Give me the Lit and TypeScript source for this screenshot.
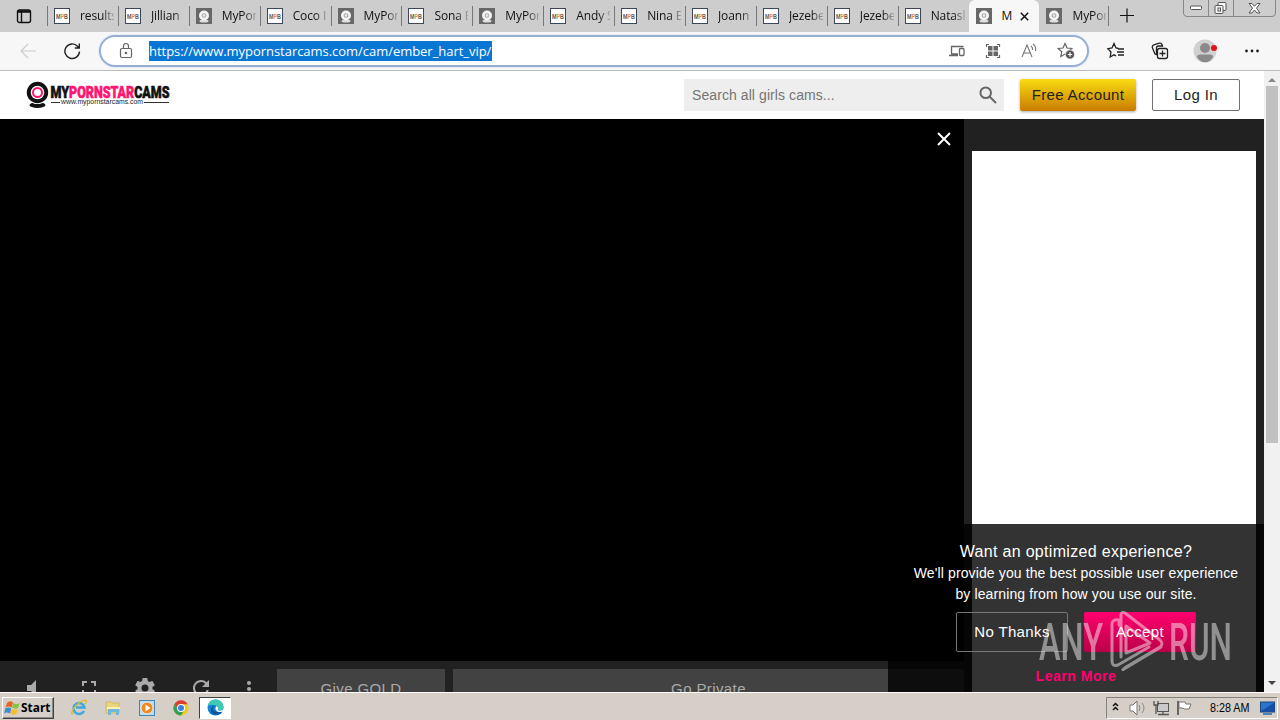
import { LitElement, html, css } from "lit";
import { customElement } from "lit/decorators.js";
import { classMap } from "lit/directives/class-map.js";

interface Tab { title: string; cam?: boolean; active?: boolean }

const tabs: Tab[] = [
  { title: "results" }, { title: "Jillian" }, { title: "MyPor", cam: true }, { title: "Coco I" },
  { title: "MyPor", cam: true }, { title: "Sona E" }, { title: "MyPor", cam: true },
  { title: "Andy S" }, { title: "Nina E" }, { title: "Joann" }, { title: "Jezebe" }, { title: "Jezebe" },
  { title: "Natasl" }, { title: "M", cam: true, active: true }, { title: "MyPor", cam: true },
];

const camIcon = html`<svg class="fav" width="16" height="16" viewBox="0 0 16 16">
  <rect width="16" height="16" fill="#686868"/><ellipse cx="8" cy="13" rx="4.5" ry="1.5" fill="#ddd"/>
  <circle cx="8" cy="7.5" r="5" fill="#f4f4f4"/><circle cx="8" cy="7.5" r="2.3" fill="#aaa"/><circle cx="8" cy="7.5" r="1.2" fill="#eee"/></svg>`;
const mpbIcon = html`<svg class="fav" width="16" height="16" viewBox="0 0 16 16">
  <rect x=".5" y=".5" width="15" height="15" fill="#fff" stroke="#3b4656"/>
  <text x="2" y="10.8" font-family="Liberation Sans" font-weight="700" font-size="7.5" textLength="12" lengthAdjust="spacingAndGlyphs" fill="#665b58">M<tspan fill="#ee8a3c">P</tspan>B</text></svg>`;
const star = "M8 1.5 10 6l4.8.5-3.600 3.200 1 4.800L8 12.100 3.800 14.500l1-4.800L1.200 6.500 6 6Z";

@customElement("app-root")
export class AppRoot extends LitElement {
  static styles = css`
    :host { display: flex; flex-direction: column; width: 1280px; height: 720px; overflow: hidden; position: relative; font-family: "Liberation Sans", Arial, sans-serif; background: #fff; }
    * { box-sizing: border-box; }
    svg { display: block; flex: none; }
    .tabs { height: 32px; flex: none; display: flex; background: #cdcdcd; font: 12px "Open Sans", sans-serif; color: #111; }
    .actions { width: 47px; padding: 8px 0 0 16px; }
    .tab { width: 70.9px; flex: none; display: flex; align-items: flex-start; border-left: 1px solid #777; height: 20px; margin-top: 6px; padding: 2px 0 0 6px; }
    .fav { margin-right: 10px; }
    .title { width: 34px; overflow: hidden; white-space: nowrap; line-height: 16px; letter-spacing: -.12px; -webkit-mask-image: linear-gradient(90deg, #000 65%, #0003); }
    .tab.active { background: #f7f7f7; height: 32px; margin-top: 0; padding-top: 8px; border: 0; border-radius: 6px 6px 0 0; padding-left: 7px; }
    .tab.active .title { width: 11px; -webkit-mask-image: none; }
    .tab.after { border-color: transparent; }
    .close { margin: 4px 0 0 7px; }
    .plus { border-left: 1px solid #777; height: 20px; margin: 6px 0 0 -2px; padding: 2px 0 0 11px; }
    .win { position: absolute; right: 4px; top: -4px; width: 93px; height: 21px; border: 1px solid #888; border-radius: 4px; display: flex; }
    .win span { display: flex; align-items: center; justify-content: center; padding-top: 3px; border-right: 1px solid #888; width: 25px; }
    .win span:last-child { border: 0; width: 41px; }
    .nav { height: 39px; flex: none; display: flex; align-items: center; background: #f7f7f7; border-bottom: 1px solid #bdbdbd; }
    .nav > .back { margin-left: 20px; }
    .nav > .reload { margin-left: 27px; }
    .url { margin-left: 18px; width: 990px; height: 32px; border: 2px solid #98aed2; border-radius: 16px; background: #fff; display: flex; align-items: center; padding: 0 11px 0 17px; box-shadow: 0 0 0 1px #e5edf8; }
    .addr { margin-left: 15px; height: 20px; width: 343px; background: #0a76d4; color: #fff; font: 13px/20px "Open Sans", sans-serif; white-space: nowrap; margin-right: auto; letter-spacing: -.035px; }
    .url .ico { margin-left: 18px; }
    .tools { display: flex; align-items: center; margin-left: 18px; }
    .collections { margin-left: 26px; }
    .profile { margin-left: 24px; }
    .dots { margin-left: 28px; }
    .page { display: flex; height: 621px; flex: none; position: relative; }
    .site { width: 1264px; display: flex; flex-direction: column; position: relative; }
    .head { height: 48px; flex: none; display: flex; align-items: center; padding: 0 24px 0 26px; background: #fff; }
    .search { margin-left: auto; width: 320px; height: 32px; background: #eee; display: flex; align-items: center; padding: 0 7px 0 8px; font-size: 14px; letter-spacing: .08px; color: #757575; justify-content: space-between; }
    .btn { display: flex; align-items: center; justify-content: center; height: 32px; font-size: 15px; letter-spacing: .36px; color: #222; border-radius: 2px; padding-bottom: 1px; }
    .gold { margin: 0 16px; width: 116px; background: linear-gradient(#f8dc12, #ca7b00); box-shadow: 0 1px 3px #0005; }
    .login { width: 88px; border: 1px solid #707070; background: #fff; }
    .body { flex: 1; display: flex; min-height: 0; background: #212121; }
    .video { width: 964px; display: flex; flex-direction: column; }
    .screen { height: 542px; flex: none; background: #000; display: flex; justify-content: flex-end; padding: 12px 12px; }
    .controls { height: 31px; overflow: hidden; display: flex; padding: 8px 0 0 20px; }
    .controls svg { width: 24px; height: 24px; margin: 7px 32px 0 0; fill: #aaa; }
    .controls svg:first-child { margin-right: 33px; }
    .controls svg.last { margin: 8px 16px 0 -8px; }
    .cbtn { width: 168px; height: 40px; flex: none; margin-right: 8px; background: #424242; color: #aaa; font-size: 15px; letter-spacing: .4px; display: flex; align-items: center; justify-content: center; padding-bottom: 1px; }
    .cbtn.wide { width: 511px; }
    .side { width: 284px; margin: 32px 0 0 8px; background: #fff; }
    .consent { position: absolute; right: 0; bottom: 0; width: 376px; height: 168px; background: #000c; color: #fff; text-align: center; padding-top: 17px; overflow: hidden; }
    .h { font-size: 16px; line-height: 21px; letter-spacing: .31px; }
    .p { font-size: 14px; line-height: 21px; letter-spacing: .12px; white-space: nowrap; padding-top: 1px; }
    .pair { display: flex; justify-content: center; gap: 16px; margin-top: 7px; }
    .pair .btn { width: 112px; height: 40px; color: #fff; }
    .no { border: 1px solid #777; }
    .yes { background: linear-gradient(#ff006e, #bb0048); }
    .more { font-size: 14px; font-weight: 700; color: #ff006e; margin-top: 16px; line-height: 17px; letter-spacing: .54px; }
    .scroll { width: 16px; background: #f1f1f1; display: flex; flex-direction: column; align-items: center; }
    .thumb { width: 12px; height: 357px; background: #c1c1c1; margin: 4px 0 auto; }
    .scroll svg { margin-top: 6px; }
    .scroll svg:last-child { margin-bottom: 6px; }
    .task { height: 28px; flex: none; background: #d5cfc7; border-top: 1px solid #fff; display: flex; align-items: center; padding: 2px 2px 0 2px; }
    .start { width: 52px; height: 22px; border: 1px solid; border-color: #fff #404040 #404040 #fff; box-shadow: inset -1px -1px #888; display: flex; align-items: center; padding-left: 1px; }
    .quick { display: flex; gap: 18px; margin-left: 17px; }
    .current { width: 32px; height: 22px; border: 1px solid; border-color: #404040 #fff #fff #404040; background: #fff; margin-left: 10px; display: flex; justify-content: center; align-items: center; }
    .tray { margin-left: auto; width: 172px; height: 22px; border: 1px solid; border-color: #85817b #fff #fff #85817b; display: flex; align-items: center; padding-left: 4px; color: #000; }
    .mark { position: absolute; left: 1036px; top: 608px; }
  `;

  render() {
    return html`
      <div class="tabs">
        <div class="actions"><svg width="16" height="16" viewBox="0 0 16 16" fill="none" stroke="#111" stroke-width="1.400"><rect x="1.500" y="2" width="13" height="12.500" rx="2"/><path d="M1.500 4h13M2 3h12M5.500 4v10"/></svg></div>
        ${tabs.map((t, i) => html`<div class=${classMap({ tab: true, active: !!t.active, after: i === 14 })}>
          ${t.cam ? camIcon : mpbIcon}<span class="title">${t.title}</span>
          ${t.active ? html`<svg class="close" width="9" height="9" viewBox="0 0 9 9"><path d="M.8.8l7.400 7.400M8.200.8.800 8.200" stroke="#111" stroke-width="1.500"/></svg>` : ""}
        </div>`)}
        <div class="plus"><svg width="14" height="16" viewBox="0 0 14 16"><path d="M0 7.500h14M7 .5v14" stroke="#111" stroke-width="1.200"/></svg></div>
      </div>
      <div class="win">
        <span><svg width="13" height="6" viewBox="0 0 13 6"><rect x=".5" y="1" width="11" height="3.500" rx="1" fill="#fff" stroke="#555"/></svg></span>
        <span><svg width="14" height="13" viewBox="0 0 14 13" fill="#f5f5f5" stroke="#555"><rect x="4" y=".5" width="8" height="8" rx="1"/><rect x="1" y="3.500" width="8" height="8" rx="1"/><rect x="4" y="6" width="2.500" height="3"/></svg></span>
        <span><svg width="13" height="11" viewBox="0 0 13 11"><path d="M1 .5h3l2.500 2.800L9 .5h3L8.500 5.200 12 10H9L6.500 7 4 10H1l3.500-4.800Z" fill="#fff" stroke="#555"/></svg></span>
      </div>
      <div class="nav">
        <svg class="back" width="16" height="16" viewBox="0 0 16 16" fill="none" stroke="#ccc" stroke-width="1.200"><path d="M16 8H1M8 1 1 8l7 7"/></svg>
        <svg class="reload" width="18" height="18" viewBox="0 0 18 18" fill="none" stroke="#222" stroke-width="1.400"><path d="M16.500 9.500A7.300 7.300 0 1 1 14.500 4.200L16 6M16.300 1.500V6H11.800"/></svg>
        <div class="url">
          <svg width="16" height="18" viewBox="0 0 16 18" fill="none" stroke="#666" stroke-width="1.200"><rect x="2.500" y="6.500" width="11" height="9" rx="1.500"/><path d="M5.500 6.500V4a2.500 2.500 0 0 1 5 0v2.500"/><circle cx="8" cy="11" r=".7" fill="#666"/></svg>
          <span class="addr">https://www.mypornstarcams.com/cam/ember_hart_vip/</span>
          <svg width="16" height="16" viewBox="0 0 16 16" fill="none" stroke="#666" stroke-width="1.300"><path d="M2.500 11V3.500h12M0 12.500h9M2 11h7"/><rect x="10.500" y="5.500" width="4.500" height="7" rx="1"/></svg>
          <svg class="ico" width="20" height="16" viewBox="0 0 20 16" fill="none" stroke="#666" stroke-width="1.200"><path d="M3.500 4V1.500H6M14 1.500h2.500V4M16.500 12v2.500H14M6 14.500H3.500V12"/><g fill="#666" stroke="none"><rect x="5" y="3" width="4.500" height="4.500"/><rect x="10.500" y="3" width="4.500" height="4.500"/><rect x="5" y="8.500" width="4.500" height="4.500"/><rect x="10.500" y="8.500" width="4.500" height="4.500"/></g></svg>
          <svg class="ico" width="17" height="16" viewBox="0 0 17 16" fill="none" stroke="#777" stroke-width="1.100"><path d="m1 14 5-12 5 12M2.800 10h6.500M10 3q2 1.500 1.500 4M12 1q3.500 2.500 2.500 7"/></svg>
          <svg class="ico" width="20" height="18" viewBox="0 0 20 18" fill="none" stroke="#666" stroke-width="1.200"><path d=${star} transform="translate(1)"/><circle cx="14" cy="12.500" r="4.500" fill="#555" stroke="#fff" stroke-width=".6"/><path d="M11.800 12.500h4.400M14 10.300v4.400" stroke="#fff"/></svg>
        </div>
        <div class="tools">
          <svg width="18" height="18" viewBox="0 0 18 18" fill="none" stroke="#222" stroke-width="1.300"><path d="M11.500 6.500 9 6 7 1.500 5 6l-4.200.7L4 10l-.8 5L7 12.800l2 1M11 7h6M10 10h7M11 13h6"/></svg>
          <svg class="collections" width="18" height="18" viewBox="0 0 18 18" fill="none" stroke="#222" stroke-width="1.300"><path d="M4 12 1.500 6q-.8-2.500 1.300-3.200l5.500-1.600q2-.5 2.800 1.500l.4 1.300H7.500Q5.500 4 5.500 6v6.500Z"/><rect x="6.500" y="6.500" width="10" height="10" rx="2"/><path d="M8.500 11.500h6M11.500 8.500v6"/></svg>
          <svg class="profile" width="24" height="24" viewBox="0 0 24 24"><circle cx="12" cy="12" r="11.500" fill="#d0d0d0"/><circle cx="12" cy="9" r="5" fill="#8a8a8a"/><path d="M4 18q0-2.500 3-2.500h10q3 0 3 2.500-3 5.300-8 5.300T4 18Z" fill="#8a8a8a"/><circle cx="21" cy="9" r="3" fill="#df1420"/></svg>
          <svg class="dots" width="14" height="4" viewBox="0 0 14 4" fill="#222"><circle cx="1.500" cy="2" r="1.400"/><circle cx="7" cy="2" r="1.400"/><circle cx="12.500" cy="2" r="1.400"/></svg>
        </div>
      </div>
      <div class="page">
        <div class="site">
          <div class="head">
            <svg width="145" height="28" viewBox="0 0 145 28">
              <ellipse cx="11.500" cy="24" rx="8" ry="3" fill="#111"/><circle cx="11.500" cy="11.500" r="11.500" fill="#fff"/><circle cx="11.500" cy="11.500" r="10.700" fill="#111"/><circle cx="11.500" cy="11.500" r="6.800" fill="#fff"/><circle cx="11.500" cy="11.500" r="4.500" fill="#fff" stroke="#ff1470" stroke-width="2"/>
              <text x="24.500" y="16.500" font-family="Roboto" font-weight="900" font-size="16" textLength="119" lengthAdjust="spacingAndGlyphs" fill="#111" stroke="#111" stroke-width=".6">MY<tspan fill="#ff1470" stroke="#ff1470">PORNSTAR</tspan>CAMS</text>
              <text x="35" y="23" font-family="Liberation Sans" font-size="7" textLength="82" lengthAdjust="spacingAndGlyphs" fill="#222">www.mypornstarcams.com</text>
              <path d="M25 21.500h9M118 21.500h25" stroke="#333"/>
            </svg>
            <div class="search"><span>Search all girls cams...</span><svg width="18" height="18" viewBox="0 0 18 18" fill="none" stroke="#666" stroke-width="2"><circle cx="6.700" cy="6.700" r="5.300"/><path d="m10.500 10.500 6.500 6.500"/></svg></div>
            <div class="btn gold">Free Account</div><div class="btn login">Log In</div>
          </div>
          <div class="body">
            <div class="video">
              <div class="screen"><svg width="16" height="16" viewBox="0 0 16 16"><path d="m2 2 12 12M14 2 2 14" stroke="#fff" stroke-width="2"/></svg></div>
              <div class="controls">
                <svg viewBox="0 0 24 24"><path d="M7 9v6h4l5 5V4l-5 5H7z"/></svg>
                <svg viewBox="0 0 24 24"><path d="M7 14H5v5h5v-2H7v-3zm-2-4h2V7h3V5H5v5zm12 7h-3v2h5v-5h-2v3zM14 5v2h3v3h2V5h-5z"/></svg>
                <svg viewBox="0 0 24 24"><path fill-rule="evenodd" d="M19.400 13a7.500 7.500 0 0 0 0-2l2.100-1.600a.5.500 0 0 0 .1-.6l-2-3.500a.5.500 0 0 0-.6-.2l-2.500 1a7.300 7.300 0 0 0-1.700-1l-.4-2.600A.5.500 0 0 0 14 2h-4a.5.500 0 0 0-.5.400l-.4 2.700a7.700 7.700 0 0 0-1.700 1L5 5.100a.5.500 0 0 0-.6.200l-2 3.500a.5.500 0 0 0 .1.600L4.600 11a7.500 7.500 0 0 0 0 2l-2.100 1.600a.5.500 0 0 0-.1.600l2 3.500a.5.500 0 0 0 .6.200l2.500-1a7.300 7.300 0 0 0 1.700 1l.4 2.600a.5.500 0 0 0 .4.400h4a.5.500 0 0 0 .5-.4l.4-2.600a7.700 7.700 0 0 0 1.700-1l2.500 1a.5.500 0 0 0 .6-.2l2-3.500a.5.500 0 0 0-.1-.6ZM12 15.500a3.500 3.500 0 1 1 0-7 3.500 3.500 0 0 1 0 7Z"/></svg>
                <svg viewBox="0 0 24 24"><path d="M17.650 6.350A8 8 0 1 0 19.730 14h-2.080A6 6 0 1 1 12 6c1.660 0 3.140.690 4.220 1.780L13 11h7V4l-2.350 2.350z"/></svg>
                <svg class="last" viewBox="0 0 24 24"><circle cx="12" cy="6" r="2"/><circle cx="12" cy="12" r="2"/></svg>
                <div class="cbtn">Give GOLD</div><div class="cbtn wide">Go Private</div>
              </div>
            </div>
            <div class="side"></div>
          </div>
          <div class="consent">
            <div class="h">Want an optimized experience?</div>
            <div class="p">We'll provide you the best possible user experience<br>by learning from how you use our site.</div>
            <div class="pair"><div class="btn no">No Thanks</div><div class="btn yes">Accept</div></div>
            <div class="more">Learn More</div>
          </div>
        </div>
        <div class="scroll"><svg width="8" height="5"><path d="M0 5 4 1l4 4Z" fill="#888"/></svg><div class="thumb"></div><svg width="8" height="5"><path d="m0 0 4 4 4-4Z" fill="#444"/></svg></div>
      </div>
      <div class="task">
        <div class="start"><svg width="49" height="18" viewBox="0 0 49 18"><path d="M3 4q3-3 6-.5L7.500 8.500q-3-2-6 0Z" fill="#e66522"/><path d="M9.500 4q3 2 6 0L14 9q-3 1.500-6-.5Z" fill="#8ac33e"/><path d="M1.300 9.500q3-2 6 0L6 14.500q-3-2-6 0Z" fill="#398fd2"/><path d="M8 10q3 1.500 5.700 0L12.300 15q-3 1.500-5.800-.5Z" fill="#f7be23"/><text x="17" y="13" font-family="Open Sans" font-size="12" font-weight="700" textLength="29.500" lengthAdjust="spacingAndGlyphs">Start</text></svg></div>
        <div class="quick">
          <svg width="16" height="18" viewBox="0 0 16 18" fill="none"><path d="M13 12a5.500 5.500 0 1 1 .5-3.500H5" stroke="#40a8df" stroke-width="2.500"/><path d="M2 14C-1 17 1 9 8 4s9-3 6 1" stroke="#e5b72c" stroke-width="1.300"/></svg>
          <svg width="16" height="18" viewBox="0 0 16 18"><path d="M1 3h5l1 1h7v10H1Z" fill="#e9d57b" stroke="#c8ad50" stroke-width=".7"/><path d="M2 8h13v2H2Z" fill="#fff3b6"/><path d="M3 10h11v6h-3v-3H6v3H3Z" fill="#70b7da"/></svg>
          <svg width="16" height="18" viewBox="0 0 16 18"><rect x=".5" y="1.500" width="15" height="15" fill="#b9dcf5" stroke="#4385b5"/><circle cx="8" cy="9" r="5.800" fill="#f18717" stroke="#fff" stroke-width=".5"/><path d="m6.500 5.500 5 3.500-5 3.500Z" fill="#fff"/></svg>
          <svg width="16" height="18" viewBox="0 0 16 18"><circle cx="8" cy="9" r="7.600" fill="#f4c81e"/><path d="M1.400 5.200A7.600 7.600 0 0 1 14.600 5.200H8L5 10.500Z" fill="#dc3e30"/><path d="M1.400 5.200A7.600 7.600 0 0 0 8 16.600l3.200-5.500L5 10.500Z" fill="#369f52"/><circle cx="8" cy="9" r="4" fill="#fff"/><circle cx="8" cy="9" r="3" fill="#397fe6"/></svg>
        </div>
        <div class="current"><svg width="17" height="17" viewBox="0 0 17 17"><circle cx="8.500" cy="8.500" r="8" fill="#1683d8"/><path d="M.8 7C2-1.500 15-2 16.500 7c.5 4-3 5-6 4 1.500-1.500.5-4-1.500-4.500C5 5 2 6 .8 7Z" fill="#40cab5"/><path d="M8 7c-4 1-2 7 6 6 1 0 1 0 1 0-2 4-12 4-11-2 0-3 2-5 4-4Z" fill="#0c55a3"/><path d="M9.500 7c2 1 2 3 1 4 2 1 4 1 6-1l-1 2.500c-5 2-9-2-6-5.500Z" fill="#fff"/></svg></div>
        <div class="tray"><svg width="164" height="20" viewBox="0 0 164 20" fill="none">
          <path d="m2 8 2.500-2.500L7 8M2 12l2.500-2.500L7 12" stroke="#111" stroke-width="1.500"/>
          <path d="M19 7h3l4-4v14l-4-4h-3Z" fill="#fff" stroke="#777"/><path d="M28 7q2 3 0 6M31 5q4 5 0 10" stroke="#888"/>
          <rect x="46.500" y="5.500" width="11" height="8" fill="#c9c9c9" stroke="#555"/><path d="M47 16.500h11M52 14v2M43 3v4h4V3M45 7v9" stroke="#555" stroke-width="1.300"/>
          <path d="M67 17V3" stroke="#666" stroke-width="2"/><path d="M68 4h6l1 2h5l-2 5h-5l-1-1h-4Z" fill="#fff" stroke="#777"/>
          <text x="99" y="14" font-family="Liberation Sans" font-size="12" fill="#000" textLength="39.500" lengthAdjust="spacingAndGlyphs">8:28 AM</text>
          <rect x="149.500" y="4" width="14" height="10" fill="#2a74cd" stroke="#1d477c"/><path d="M150 13 163 5v9h-13Z" fill="#164fa5"/><path d="M152 16h9" stroke="#4c84b8" stroke-width="2"/>
        </svg></div>
      </div>
      <svg class="mark" width="200" height="66" viewBox="0 0 200 66" fill="none" opacity=".46">
        <g font-family="Roboto" font-size="52" font-weight="500" fill="#fff"><text x="3" y="52" textLength="64" lengthAdjust="spacingAndGlyphs">ANY</text><text x="133" y="52" textLength="63" lengthAdjust="spacingAndGlyphs">RUN</text></g>
        <path d="M83 17v-5q-7-1-7 4v37q0 6 6 4l31-18M85 49V7q0-4 4-2l35 27q4 4 0 7L90 59q-5 4-2 2l37-22M90 18v27l24-10Z" stroke="#fff" stroke-width="3" stroke-linecap="round" stroke-linejoin="round"/>
      </svg>`;
  }
}
